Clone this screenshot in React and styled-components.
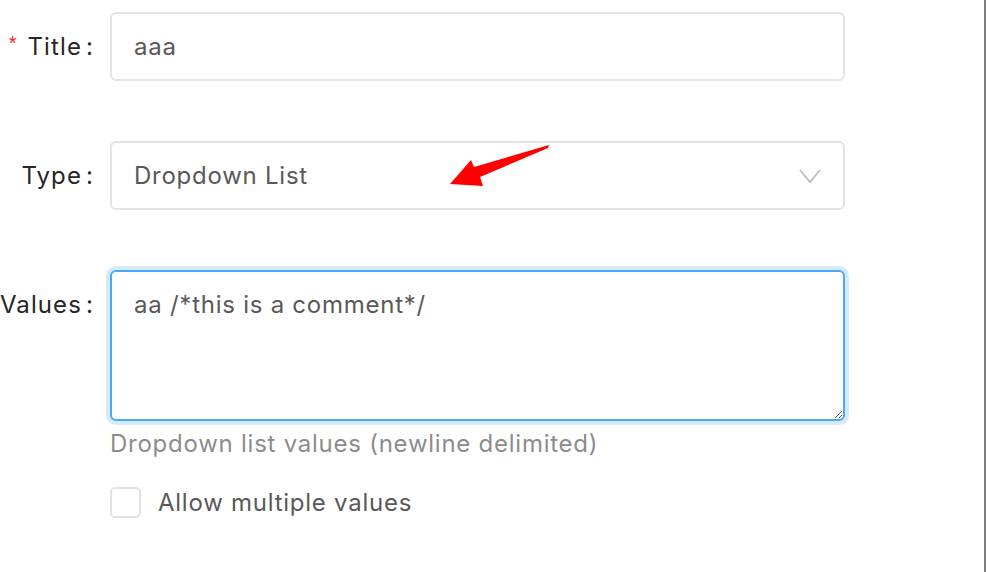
import React from "react";
import styled, { createGlobalStyle } from "styled-components";

const GlobalStyle = createGlobalStyle`
  html, body {
    margin: 0;
    padding: 0;
    background: #fff;
  }
  body {
    font-family: Inter, "Noto Sans", sans-serif;
    letter-spacing: 0.75px;
  }
`;

const Page = styled.div`
  position: relative;
  width: 986px;
  height: 572px;
  box-sizing: border-box;
  border-right: 2px solid #7d7d7d;
  overflow: hidden;
`;

const Form = styled.form`
  display: grid;
  grid-template-columns: 110px 735px;
  row-gap: 60px;
  padding-top: 12px;
`;

const Label = styled.label`
  display: flex;
  align-items: ${(p) => (p.$top ? "flex-start" : "center")};
  justify-content: flex-end;
  height: ${(p) => (p.$top ? "auto" : "69px")};
  padding-top: ${(p) => (p.$top ? "20px" : "0")};
  padding-right: 16px;
  font-size: 24px;
  letter-spacing: 1.1px;
  color: #262626;
  white-space: nowrap;
  &::after {
    content: ":";
    margin-left: 4px;
  }
`;

const Required = styled.span`
  color: #f5222d;
  font-size: 20px;
  margin-right: 10px;
  margin-top: -6px;
  font-family: "Liberation Sans", sans-serif;
`;

const Input = styled.div`
  box-sizing: border-box;
  height: 69px;
  display: flex;
  align-items: center;
  justify-content: space-between;
  padding: 0 22px;
  border: 2px solid #e4e4e4;
  border-radius: 6px;
  font-size: 24px;
  color: #595959;
`;

const Chevron = styled.svg`
  width: 22px;
  height: 16px;
`;

const Control = styled.div`
  display: flex;
  flex-direction: column;
`;

const TextArea = styled.textarea`
  box-sizing: border-box;
  height: 151px;
  padding: 16px 22px;
  border: 2px solid #4aa8fa;
  border-radius: 6px;
  box-shadow: 0 0 0 4px #d6eafd;
  outline: none;
  resize: vertical;
  font-family: Inter, "Noto Sans", sans-serif;
  letter-spacing: 0.75px;
  font-size: 24px;
  color: #595959;
  line-height: 34px;
`;

const Help = styled.div`
  margin-top: 6px;
  font-size: 24px;
  color: #8c8c8c;
  line-height: 34px;
`;

const CheckRow = styled.label`
  display: flex;
  align-items: center;
  gap: 17px;
  margin-top: 26px;
  font-size: 24px;
  color: #595959;
`;

const Box = styled.span`
  box-sizing: border-box;
  width: 31px;
  height: 31px;
  border: 2px solid #e2e2e2;
  border-radius: 5px;
`;

const Arrow = styled.svg`
  position: absolute;
  left: 0;
  top: 0;
  pointer-events: none;
`;

export default function App() {
  return (
    <>
      <GlobalStyle />
      <Page>
        <Form>
          <Label>
            <Required>*</Required>Title
          </Label>
          <Input>aaa</Input>

          <Label>Type</Label>
          <Input>
            Dropdown List
            <Chevron viewBox="0 0 22 16">
              <polyline points="1,2 11,14 21,2" fill="none" stroke="#bdbdbd" strokeWidth="1.8" />
            </Chevron>
          </Input>

          <Label $top>Values</Label>
          <Control>
            <TextArea defaultValue="aa /*this is a comment*/" />
            <Help>Dropdown list values (newline delimited)</Help>
            <CheckRow>
              <Box />
              Allow multiple values
            </CheckRow>
          </Control>
        </Form>
        <Arrow width="986" height="572" viewBox="0 0 986 572">
          <polygon points="549,145 548,148 480,177 483,186 450,184 471,160 474,167" fill="#ff0000" />
        </Arrow>
      </Page>
    </>
  );
}
